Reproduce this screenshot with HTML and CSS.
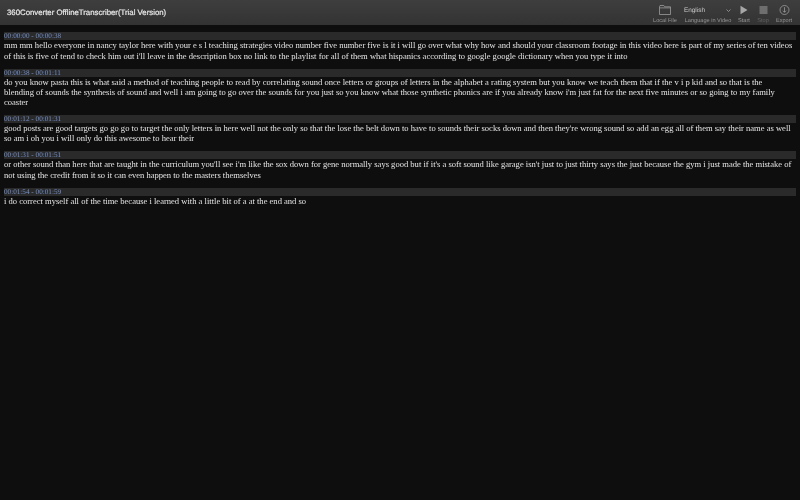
FILE: index.html
```html
<!DOCTYPE html>
<html lang="en">
<head>
  <meta charset="UTF-8">
  <title>360Converter OfflineTranscriber(Trial Version)</title>
  <link rel="stylesheet" href="styles.css">
</head>
<body>
  <header class="titlebar">
    <h1 class="app-title">360Converter OfflineTranscriber(Trial Version)</h1>
    <div class="toolbar">
      <div class="tool tool-file">
        <svg class="tool-icon" width="12" height="10" viewBox="0 0 12 10"><path d="M.5 1.8V9.5h11V1.8H5.6L4.8.5H1z M.5 2.9h11" fill="none" stroke="#9c9c9c" stroke-width="0.8"/></svg>
        <span class="tool-label">Local File</span>
      </div>
      <div class="tool tool-lang">
        <div class="lang-select"><span>English</span>
          <svg width="5" height="3" viewBox="0 0 5 3"><path d="M.5.5l2 2 2-2" fill="none" stroke="#a0a0a0" stroke-width="0.8"/></svg>
        </div>
        <span class="tool-label">Language in Video</span>
      </div>
      <div class="tool tool-start">
        <svg class="tool-icon" width="8" height="10" viewBox="0 0 8 10"><path d="M.5.8v8.4l7-4.2z" fill="#a6a6a6"/></svg>
        <span class="tool-label">Start</span>
      </div>
      <div class="tool tool-stop is-disabled">
        <svg class="tool-icon" width="9" height="10" viewBox="0 0 9 10"><rect x="0.5" y="1" width="8" height="8" fill="#6e6e6e"/></svg>
        <span class="tool-label">Stop</span>
      </div>
      <div class="tool tool-export">
        <svg class="tool-icon" width="11" height="10" viewBox="0 0 11 10"><circle cx="5.5" cy="5" r="4.5" fill="none" stroke="#a9a9a9" stroke-width="0.7"/><path d="M5.5 2.2v5M3.9 5.7l1.6 1.6 1.6-1.6" fill="none" stroke="#a9a9a9" stroke-width="0.7"/></svg>
        <span class="tool-label">Export</span>
      </div>
    </div>
  </header>
  <main class="transcript">
    <section class="segment">
      <div class="timecode">00:00:00 - 00:00:38</div>
      <p class="caption">mm mm hello everyone in nancy taylor here with your e s l teaching strategies video number five number five is it i will go over what why how and should your classroom footage in this video here is part of my series of ten videos of this is five of tend to check him out i'll leave in the description box no link to the playlist for all of them what hispanics according to google google dictionary when you type it into</p>
    </section>
    <section class="segment">
      <div class="timecode">00:00:38 - 00:01:11</div>
      <p class="caption">do you know pasta this is what said a method of teaching people to read by correlating sound once letters or groups of letters in the alphabet a rating system but you know we teach them that if the v i p kid and so that is the blending of sounds the synthesis of sound and well i am going to go over the sounds for you just so you know what those synthetic phonics are if you already know i'm just fat for the next five minutes or so going to my family coaster</p>
    </section>
    <section class="segment">
      <div class="timecode">00:01:12 - 00:01:31</div>
      <p class="caption">good posts are good targets go go go to target the only letters in here well not the only so that the lose the belt down to have to sounds their socks down and then they're wrong sound so add an egg all of them say their name as well so am i oh you i will only do this awesome to hear their</p>
    </section>
    <section class="segment">
      <div class="timecode">00:01:31 - 00:01:51</div>
      <p class="caption">or other sound than here that are taught in the curriculum you'll see i'm like the sox down for gene normally says good but if it's a soft sound like garage isn't just to just thirty says the just because the gym i just made the mistake of not using the credit from it so it can even happen to the masters themselves</p>
    </section>
    <section class="segment">
      <div class="timecode">00:01:54 - 00:01:59</div>
      <p class="caption">i do correct myself all of the time because i learned with a little bit of a at the end and so</p>
    </section>
  </main>
</body>
</html>
```

FILE: styles.css
```css
/* General styles */
html, body {
  margin: 0;
  padding: 0;
  height: 100%;
}

body {
  background-color: #0e0e0f;
  color: #e6e6e6;
  font-family: "Liberation Serif", "Times New Roman", serif;
  overflow: hidden;
  text-rendering: geometricPrecision;
}

.titlebar {
  height: 25px;
  display: flex;
  align-items: flex-start;
  justify-content: space-between;
  background: linear-gradient(to bottom, #3f3e3f, #343334);
  box-sizing: border-box;
}

.app-title {
  margin: 8px 0 0 7px;
  font-family: "Liberation Sans", Arial, sans-serif;
  font-size: 7.8px;
  line-height: 10px;
  font-weight: normal;
  color: #e8e8e8;
  -webkit-text-stroke: 0.2px #e8e8e8;
  filter: blur(0.25px);
}

.toolbar {
  display: flex;
  padding-top: 5px;
  filter: blur(0.25px);
}

.tool {
  display: flex;
  flex-direction: column;
  align-items: center;
  text-align: center;
}

.tool-file { width: 24px; margin-right: 4px; }
.tool-lang { width: 54px; margin-right: 0.5px; }
.tool-start { width: 17px; margin-right: 2px; }
.tool-stop { width: 17px; margin-right: 2.5px; }
.tool-export { width: 20px; margin-right: 6px; }

.tool-icon {
  display: block;
  height: 10px;
  margin-bottom: 2.5px;
}

.lang-select {
  width: 100%;
  height: 10px;
  margin-bottom: 2.5px;
  box-sizing: border-box;
  padding: 0 4px 0 3px;
  display: flex;
  align-items: center;
  justify-content: space-between;
  font-family: "Liberation Sans", Arial, sans-serif;
  font-size: 6.4px;
  color: #c9c9c9;
}

.tool-label {
  font-family: "Liberation Sans", Arial, sans-serif;
  font-size: 5.6px;
  line-height: 7px;
  color: #949494;
  white-space: nowrap;
}

.is-disabled .tool-label {
  color: #606060;
}

.transcript {
  padding: 7.3px 4px 0;
}

.segment {
  margin-bottom: 7.7px;
}

.timecode {
  height: 8px;
  line-height: 8px;
  background-color: #2a2a2a;
  color: #7390cc;
  font-size: 7.2px;
  filter: blur(0.2px);
}

.caption {
  margin: 0;
  padding-right: 2px;
  font-size: 8.555px;
  line-height: 10.3px;
  color: #e6e6e6;
  filter: blur(0.2px);
}
```
